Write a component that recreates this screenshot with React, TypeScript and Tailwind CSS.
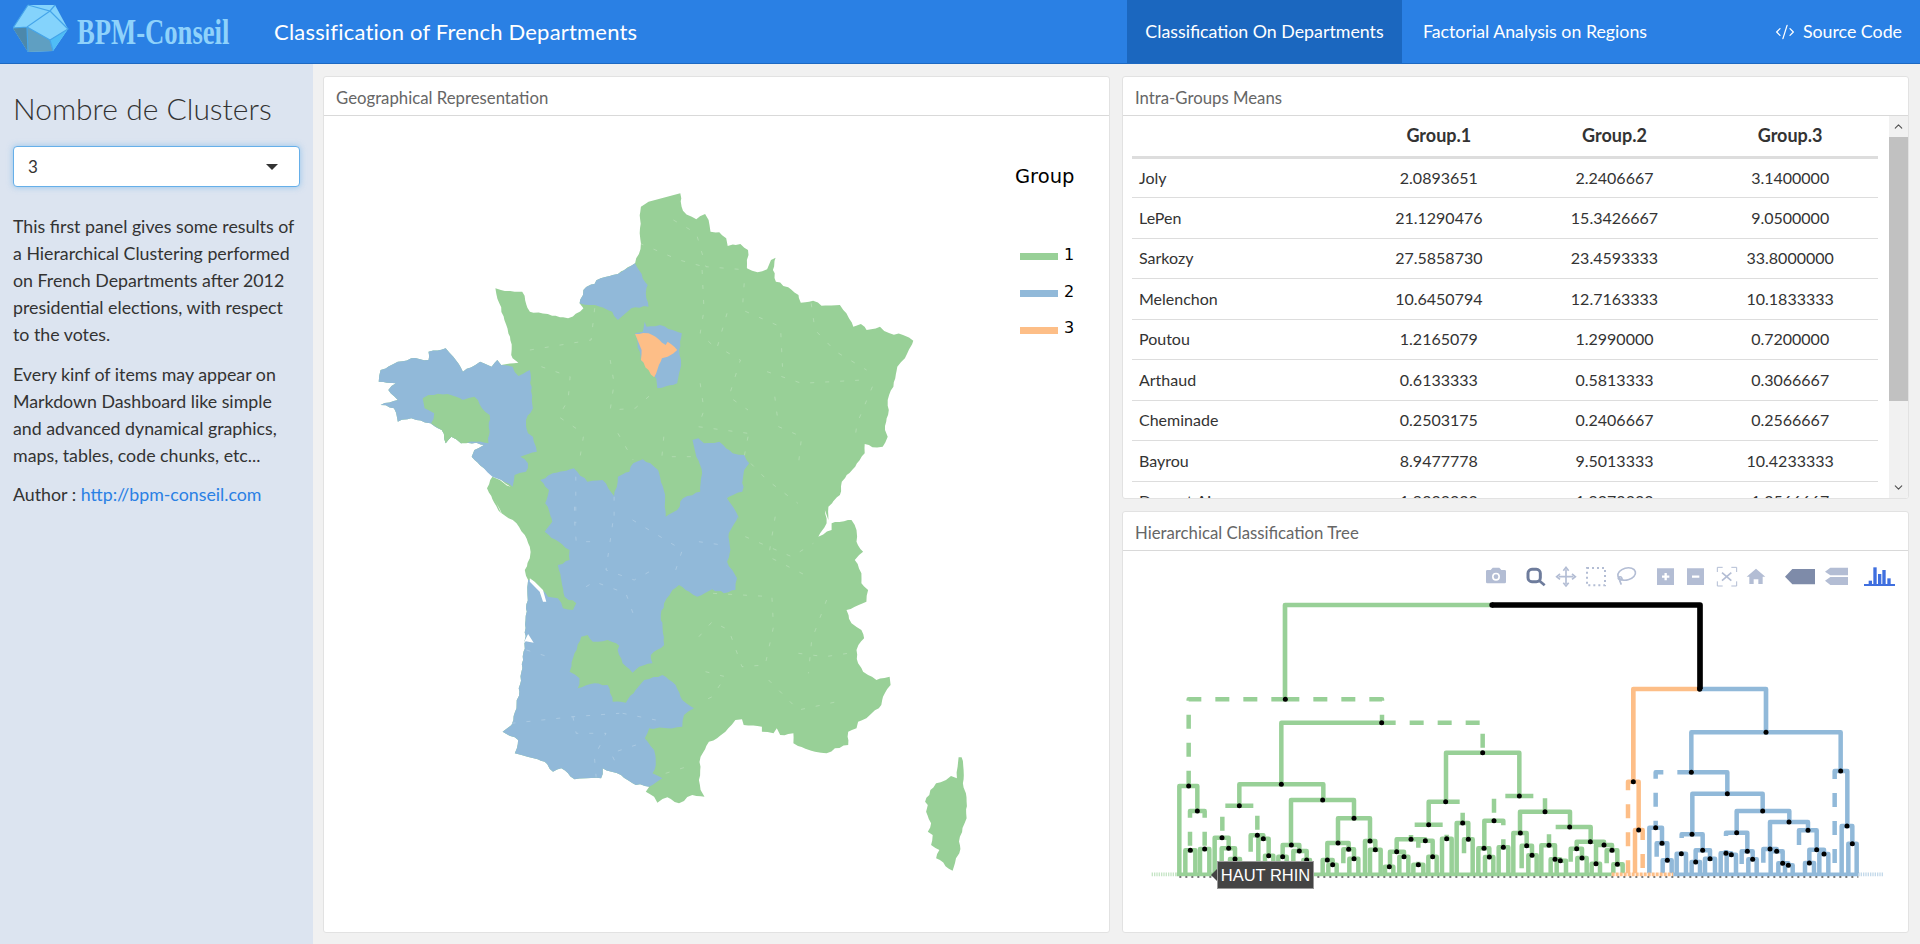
import { ChevronDown, ChevronUp, CodeXml } from "lucide-react";

const GREEN = "#98d097";
const BLUE = "#91b9d9";
const ORANGE = "#fdbe87";

// traced outlines, in crop coordinates of the two map crops
const north = (p: number[]) => toPoints(p, 350, 2.613, 170);
const south = (p: number[]) => toPoints(p, 480, 3.015, 500);

const noise = (x: number, y: number) => {
  const s = Math.sin(x * 12.9898 + y * 78.233) * 43758.5453;
  return (s - Math.floor(s) - 0.5) * 1.8;
};

// department edges are fine-grained, so break long segments up a little
function toPoints(p: number[], ox: number, sx: number, oy: number) {
  const out: string[] = [];
  for (let i = 0; i < p.length; i += 2) {
    const x = ox + p[i] / sx;
    const y = oy + p[i + 1] / 3;
    out.push(`${x.toFixed(1)},${y.toFixed(1)}`);
    if (i + 3 < p.length) {
      const nx = ox + p[i + 2] / sx;
      const ny = oy + p[i + 3] / 3;
      const steps = Math.floor(Math.hypot(nx - x, ny - y) / 4);
      for (let k = 1; k < steps; k++) {
        const px = Math.round((x + ((nx - x) * k) / steps) * 4) / 4;
        const py = Math.round((y + ((ny - y) * k) / steps) * 4) / 4;
        out.push(`${(px + noise(px, py)).toFixed(1)},${(py + noise(py, px)).toFixed(1)}`);
      }
    }
  }
  return out.join(" ");
}

const plain = (p: number[], ox: number, sx: number, oy: number) => {
  const out: string[] = [];
  for (let i = 0; i < p.length; i += 2) {
    out.push(`${(ox + p[i] / sx).toFixed(1)},${(oy + p[i + 1] / 3).toFixed(1)}`);
  }
  return out.join(" ");
};

const franceEast = [
  863, 70, 870, 122, 893, 140, 905, 148, 928, 132, 937, 150, 942, 185, 965, 187, 983, 205, 987, 228, 1020, 222, 1040,
  240, 1037, 295, 1065, 307, 1090, 298, 1100, 270, 1112, 263, 1105, 300, 1113, 335, 1145, 352, 1172, 375, 1178, 398,
  1210, 392, 1232, 407, 1280, 405, 1297, 430, 1315, 470, 1335, 462, 1350, 480, 1385, 470, 1410, 490, 1445, 495, 1472,
  512, 1450, 565, 1430, 590, 1420, 650, 1405, 690, 1408, 720, 1398, 780, 1405, 800, 1392, 830, 1365, 832, 1345, 822,
  1345, 850, 1320, 890, 1285, 935, 1280, 975, 1250, 1010, 1250, 1050,
];
const franceSouth = [
  1040, 30, 1045, 70, 1020, 110, 1060, 90, 1060, 70, 1120, 60, 1135, 90, 1135, 125, 1155, 155, 1130, 180, 1150, 220,
  1150, 250, 1170, 270, 1165, 305, 1105, 330, 1120, 370, 1150, 390, 1158, 415, 1135, 450, 1140, 490, 1155, 515, 1195,
  540, 1235, 530, 1238, 555, 1215, 590, 1210, 615, 1165, 655, 1140, 665, 1135, 685, 1110, 695, 1110, 735, 1070, 745,
  1045, 760, 1010, 755, 945, 730, 945, 700, 905, 705, 895, 685, 885, 700, 850, 695, 850, 680, 795, 675, 790, 658, 770,
  660, 740, 695, 715, 715, 690, 725, 665, 770, 660, 840, 665, 870, 677, 890, 640, 885, 600, 910, 565, 892, 535, 908,
  525, 890, 500, 875, 510, 860, 460, 850, 425, 825, 370, 805, 365, 835, 320, 835, 285, 838, 245, 805, 220, 815, 195,
  785, 125, 765, 105, 760, 115, 720, 68, 695, 95, 675, 110, 625, 130, 480, 135, 420, 145, 240, 135, 210, 150, 175, 150,
  140, 135, 105, 110, 70, 65, 40, 45, 0,
];
const franceWest = [
  395, 1030, 358, 955, 372, 920, 420, 950, 395, 930, 350, 895, 318, 860, 325, 840, 350, 825, 330, 818, 290, 820, 265,
  800, 250, 820, 240, 780, 210, 760, 160, 745, 125, 755, 115, 715, 80, 705, 125, 690, 100, 660, 120, 640, 75, 635, 80,
  600, 125, 575, 160, 565, 205, 570, 205, 545, 250, 535, 270, 560, 295, 605, 340, 575, 370, 590, 385, 570, 395, 585,
  440, 578, 425, 565, 418, 500, 390, 400, 380, 355, 430, 365, 450, 365, 470, 425, 570, 445, 610, 415, 600, 400, 610,
  360, 655, 325, 700, 312, 745, 280, 755, 252, 760, 220, 757, 190, 760, 110, 780, 95,
];
const brittany = [
  372, 920, 350, 895, 318, 860, 325, 840, 350, 825, 330, 818, 290, 820, 265, 800, 250, 820, 240, 780, 210, 760, 160,
  745, 125, 755, 115, 715, 80, 705, 125, 690, 100, 660, 120, 640, 75, 635, 80, 600, 125, 575, 160, 565, 205, 570, 205,
  545, 250, 535, 270, 560, 295, 605, 340, 575, 370, 590, 385, 570, 395, 585, 425, 590, 440, 618, 470, 600, 475, 690,
  478, 715, 460, 750, 465, 790, 478, 800, 488, 845, 445, 860, 465, 880, 460, 905, 430, 915, 425, 950, 395, 930,
];
const morbihan = [
  190, 685, 205, 675, 255, 672, 295, 690, 325, 680, 345, 715, 365, 735, 362, 820, 330, 815, 290, 820, 265, 800, 250,
  820, 240, 780, 212, 760, 220, 730, 195, 715,
];
const normandy = [
  745, 280, 778, 345, 773, 370, 780, 410, 735, 415, 700, 450, 685, 425, 640, 405, 600, 400, 610, 360, 655, 325, 700,
  312,
];
const paris = [770, 455, 775, 470, 810, 465, 867, 490, 860, 540, 865, 570, 855, 640, 803, 655, 800, 625, 760, 570, 745, 490, 765, 485];
const essonne = [
  745, 492, 780, 490, 790, 495, 825, 525, 830, 515, 855, 540, 830, 560, 815, 565, 800, 610, 795, 622, 780, 600, 760,
  570, 762, 540,
];
const centreNorth = [
  895, 810, 910, 805, 925, 820, 965, 815, 1000, 850, 1030, 855, 1043, 880, 1030, 900, 1025, 965, 990, 980, 985, 985,
  1015, 1040, 1018, 1075,
];
const centreSouth = [
  778, 50, 750, 100, 755, 150, 745, 185, 775, 235, 770, 270, 735, 280, 700, 268, 655, 290, 600, 255, 580, 270, 555, 310,
  545, 345, 555, 435, 515, 465, 520, 490, 480, 500, 460, 518, 430, 490, 415, 450, 420, 437, 385, 420, 340, 425, 325,
  405, 305, 410, 285, 460, 270, 515, 300, 535, 295, 565, 345, 550, 385, 555, 400, 605, 440, 608, 495, 540, 550, 525,
  590, 555, 610, 600, 645, 625, 615, 645, 610, 680, 565, 685, 510, 685, 497, 715, 525, 750, 530, 795, 520, 820, 550,
  835, 510, 860, 460, 850, 425, 825, 370, 805, 365, 835, 320, 835, 285, 838, 245, 805, 220, 815, 195, 785, 125, 765,
  105, 760, 115, 720, 68, 695, 95, 675, 110, 625, 130, 480, 135, 420, 145, 240, 158, 240, 205, 290, 235, 295, 250, 325,
  280, 330, 290, 310, 255, 290, 235, 195, 270, 180, 270, 150, 195, 95, 218, 65, 205, 0,
];
const centreWest = [
  530, 1050, 510, 1000, 520, 960, 497, 930, 530, 910, 585, 895, 620, 935, 660, 930, 690, 978, 700, 920, 730, 905, 740,
  880, 765, 868, 785, 880, 805, 900, 820, 960, 825, 1040, 855, 1020, 870, 985, 915, 965, 920, 910, 905, 860,
];
const corsica = [
  1443, 772, 1452, 772, 1458, 810, 1456, 850, 1465, 880, 1467, 955, 1447, 1010, 1445, 1060, 1435, 1075, 1425, 1112,
  1375, 1075, 1385, 1050, 1360, 1035, 1365, 1005, 1350, 995, 1360, 970, 1345, 935, 1350, 915, 1342, 905, 1358, 870,
  1375, 850, 1405, 840, 1420, 828, 1438, 835, 1440, 800,
];
const northBorders = [
  [845, 150, 905, 190, 930, 290, 1040, 300],
  [757, 220, 860, 270, 925, 290],
  [920, 300, 925, 420, 915, 490, 960, 540],
  [1030, 340, 1025, 420, 1125, 470, 1130, 590],
  [985, 430, 960, 530, 1020, 570, 990, 680, 1040, 720],
  [1205, 400, 1215, 480, 1270, 545, 1350, 600],
  [1090, 605, 1180, 640, 1340, 630],
  [1365, 650, 1325, 760, 1320, 800],
  [1110, 680, 1120, 770, 1180, 800, 1170, 900],
  [470, 540, 630, 510, 640, 410],
  [500, 590, 575, 620, 570, 690, 545, 740, 610, 790],
  [680, 570, 690, 640, 680, 720, 745, 715, 800, 660],
  [610, 800, 600, 870],
  [700, 790, 740, 870],
  [820, 800, 815, 860, 905, 860],
  [915, 640, 925, 720, 910, 770, 1040, 790],
  [1040, 800, 1030, 860, 1090, 930, 1170, 1000],
  [590, 920, 590, 1060],
  [690, 980, 690, 1070],
];
const southBorders = [
  [285, 20, 285, 60, 290, 125, 365, 125],
  [400, 70, 380, 210, 465, 240, 520, 210],
  [460, 60, 610, 150, 590, 210],
  [660, 125, 730, 135],
  [320, 260, 345, 245, 440, 280, 465, 350],
  [140, 450, 205, 470],
  [95, 670, 280, 650, 420, 640],
  [280, 650, 290, 700, 380, 700, 345, 770, 350, 830],
  [430, 640, 530, 660],
  [470, 735, 395, 760, 410, 790],
  [890, 50, 870, 170, 980, 225],
  [660, 410, 700, 365, 750, 390, 790, 500, 860, 495, 885, 380, 880, 290, 700, 280],
  [800, 110, 940, 170, 1005, 130],
  [960, 460, 1040, 470, 1110, 460],
  [870, 540, 960, 630, 1100, 600],
  [680, 515, 740, 530, 700, 590, 660, 610],
  [1045, 300, 1000, 420, 990, 520],
  [560, 820, 640, 795],
];

// hclust layout in units of 1/3 px: [x, y, leftX, leftEnd, rightX, rightEnd, dashLeft, dashRight]
type Node = [number, number, number, number, number, number, number?, number?];

const greenNodes: Node[] = [
  [436, 118, 146, 378, 726, 188, 1, 1],
  [725, 188, 424, 373, 1028, 278, 0, 1],
  [424, 373, 298, 437, 550, 420],
  [146, 378, 118, 640, 172, 453],
  [172, 453, 150, 571, 194, 567, 1, 1],
  [151, 571, 136, 640, 166, 640],
  [194, 567, 180, 640, 208, 640],
  [298, 437, 247, 533, 352, 526, 1, 1],
  [246, 533, 224, 640, 266, 565],
  [266, 565, 245, 640, 285, 597],
  [285, 597, 270, 640, 300, 640],
  [352, 526, 332, 575, 370, 536],
  [370, 536, 355, 640, 386, 587],
  [386, 587, 375, 640, 400, 640],
  [548, 420, 453, 555, 642, 475],
  [454, 555, 428, 590, 478, 573],
  [428, 590, 415, 640, 440, 640],
  [478, 573, 460, 640, 500, 600],
  [500, 600, 490, 640, 510, 640],
  [642, 475, 594, 549, 690, 543],
  [594, 549, 562, 600, 626, 568],
  [562, 600, 548, 640, 578, 614],
  [578, 614, 565, 640, 590, 640],
  [626, 568, 610, 610, 642, 596],
  [642, 596, 628, 640, 655, 640],
  [690, 543, 675, 640, 706, 569],
  [706, 569, 690, 640, 722, 640],
  [1028, 278, 918, 425, 1138, 408],
  [917, 425, 866, 494, 968, 489, 0, 1],
  [866, 494, 813, 538, 920, 536, 1, 1],
  [813, 538, 770, 575, 856, 542],
  [856, 542, 835, 614, 878, 590, 1, 0],
  [770, 575, 750, 620, 792, 590],
  [748, 620, 735, 640, 760, 640],
  [792, 590, 778, 640, 805, 640],
  [835, 614, 820, 640, 850, 640],
  [878, 590, 865, 640, 890, 640],
  [920, 536, 906, 640, 935, 640],
  [968, 489, 950, 640, 985, 538],
  [985, 538, 972, 580, 998, 640],
  [1138, 408, 1062, 482, 1215, 455, 1, 1],
  [1062, 482, 1033, 565, 1090, 562, 0, 1],
  [1032, 565, 1015, 640, 1048, 591],
  [1048, 591, 1035, 640, 1060, 640],
  [1090, 562, 1076, 640, 1105, 640],
  [1215, 455, 1140, 519, 1290, 501],
  [1141, 519, 1120, 640, 1160, 557],
  [1160, 557, 1145, 625, 1176, 586],
  [1176, 586, 1165, 640, 1190, 640],
  [1289, 501, 1227, 556, 1352, 545, 1, 0],
  [1227, 556, 1204, 640, 1245, 598],
  [1245, 598, 1232, 640, 1261, 602],
  [1261, 602, 1250, 640, 1278, 640],
  [1351, 545, 1310, 566, 1392, 555],
  [1310, 566, 1292, 605, 1326, 594],
  [1326, 594, 1312, 640, 1340, 640],
  [1392, 555, 1368, 611, 1416, 571],
  [1368, 611, 1355, 640, 1380, 640],
  [1416, 571, 1400, 610, 1432, 613],
  [1432, 613, 1420, 640, 1448, 640],
];
const orangeNodes: Node[] = [
  [1480, 365, 1464, 640, 1496, 510, 1, 0],
  [1496, 510, 1485, 640, 1508, 640, 0, 1],
];
const blueNodes: Node[] = [
  [1878, 217, 1654, 337, 2102, 333],
  [1654, 337, 1547, 503, 1762, 401, 1, 0],
  [1547, 503, 1528, 640, 1566, 550],
  [1566, 550, 1550, 590, 1582, 601],
  [1582, 601, 1568, 640, 1595, 640],
  [1762, 401, 1657, 523, 1868, 453],
  [1656, 523, 1625, 581, 1688, 571, 1, 0],
  [1624, 581, 1610, 640, 1638, 640],
  [1688, 571, 1667, 606, 1710, 596],
  [1667, 606, 1655, 640, 1680, 640],
  [1710, 596, 1695, 640, 1725, 640],
  [1868, 453, 1790, 518, 1948, 486],
  [1790, 518, 1758, 580, 1822, 574, 1, 0],
  [1758, 580, 1742, 640, 1774, 584],
  [1774, 584, 1760, 640, 1788, 640],
  [1822, 574, 1805, 612, 1838, 598],
  [1838, 598, 1825, 640, 1850, 640],
  [1947, 486, 1890, 567, 2004, 511],
  [1890, 567, 1870, 608, 1910, 574],
  [1910, 574, 1892, 640, 1928, 610],
  [1928, 610, 1915, 640, 1945, 616],
  [1945, 616, 1935, 640, 1958, 640],
  [2004, 511, 1977, 555, 2030, 569],
  [2030, 569, 2008, 609, 2052, 582],
  [2008, 609, 1995, 640, 2022, 640],
  [2052, 582, 2038, 640, 2065, 640],
  [2102, 333, 2084, 640, 2122, 498, 1, 0],
  [2121, 498, 2105, 640, 2137, 551],
  [2137, 551, 2125, 640, 2150, 640],
];

const rows = [
  ["Joly", "2.0893651", "2.2406667", "3.1400000"],
  ["LePen", "21.1290476", "15.3426667", "9.0500000"],
  ["Sarkozy", "27.5858730", "23.4593333", "33.8000000"],
  ["Melenchon", "10.6450794", "12.7163333", "10.1833333"],
  ["Poutou", "1.2165079", "1.2990000", "0.7200000"],
  ["Arthaud", "0.6133333", "0.5813333", "0.3066667"],
  ["Cheminade", "0.2503175", "0.2406667", "0.2566667"],
  ["Bayrou", "8.9477778", "9.5013333", "10.4233333"],
  ["Dupont.Aignan", "1.9222222", "1.9273333", "1.2566667"],
];

const Branches = ({ nodes, color }: { nodes: Node[]; color: string }) => (
  <g fill="none" stroke={color} strokeWidth={13.5} strokeLinejoin="round">
    {nodes.map(([x, y, lx, ly, rx, ry, dl, dr]) => (
      <g key={`${x}-${y}`}>
        <path d={`M${x} ${y}H${lx}V${ly}`} strokeDasharray={dl ? "42 42" : undefined} />
        <path d={`M${x} ${y}H${rx}V${ry}`} strokeDasharray={dr ? "42 42" : undefined} />
      </g>
    ))}
  </g>
);

const Dots = ({ nodes }: { nodes: Node[] }) => (
  <g fill="#000">
    {nodes.map(([x, y]) => (
      <circle key={`${x}-${y}`} cx={x} cy={y} r={7.5} />
    ))}
  </g>
);

const FranceMap = () => (
  <svg viewBox="324 116 785 816" className="block h-full w-full">
    <polygon
      fill={GREEN}
      points={`${north(franceEast)} ${south(franceSouth)} ${north(franceWest)}`}
    />
    <polygon fill={BLUE} points={north(brittany)} />
    <polygon fill={GREEN} points={north(morbihan)} />
    <polygon fill={BLUE} points={north(normandy)} />
    <polygon fill={BLUE} points={north(paris)} />
    <polygon fill={ORANGE} points={north(essonne)} />
    <polygon
      fill={BLUE}
      points={`${north(centreNorth)} ${south(centreSouth)} ${north(centreWest)}`}
    />
    <polygon fill={GREEN} points={south(corsica)} />
    <polygon fill="#fff" points={plain([150, 235, 165, 245, 190, 270, 200, 305, 190, 305, 180, 275, 150, 245], 480, 3.015, 500)} />
    <polygon fill="#fff" points={plain([130, 432, 145, 402, 162, 428, 138, 424], 480, 3.015, 500)} />
    <g fill="none" stroke="#fff" strokeWidth={0.5} strokeOpacity={0.45} strokeDasharray="4 11">
      {northBorders.map((b, i) => (
        <polyline key={i} points={plain(b, 350, 2.613, 170)} />
      ))}
      {southBorders.map((b, i) => (
        <polyline key={i} points={plain(b, 480, 3.015, 500)} />
      ))}
    </g>
    <g className="font-['DejaVu_Sans',sans-serif]" fill="#000">
      <text x={1015} y={183} fontSize={19.5}>
        Group
      </text>
      <rect x={1020} y={253} width={38} height={7} fill={GREEN} />
      <rect x={1020} y={290} width={38} height={7} fill={BLUE} />
      <rect x={1020} y={327} width={38} height={7} fill={ORANGE} />
      <text x={1064} y={260} fontSize={16}>
        1
      </text>
      <text x={1064} y={297} fontSize={16}>
        2
      </text>
      <text x={1064} y={333} fontSize={16}>
        3
      </text>
    </g>
  </svg>
);

const ModeBar = () => (
  <g transform="translate(960 -330)">
    <g fill="#b3bdd4">
      <path d="M78 64a4 4 0 0 1 4-4h10l6-7h20l6 7h10a4 4 0 0 1 4 4v32a4 4 0 0 1-4 4H82a4 4 0 0 1-4-4z" />
      <circle cx={108} cy={80} r={12} fill="#fff" />
      <circle cx={108} cy={80} r={7} />
      <path d="M591 55h51v50h-51z" />
      <path d="M681 55h51v50h-51z" />
      <path d="M888 56l28 24h-8v22h-13V88h-14v14h-13V80h-8z" />
      <path d="M1095 65l16-12h53v23h-53zM1095 92l16-11h53v24h-53z" />
    </g>
    <path d="M606 80h22M617 69v22M696 80h22" stroke="#fff" strokeWidth={7} />
    <path d="M975 80l22-23h68v46h-68z" fill="#7e8ba9" />
    <g fill="none" stroke="#6e7c9c">
      <rect x={204} y={58} width={37} height={37} rx={12} strokeWidth={9} />
      <path d="M238 92l16 14" strokeWidth={8} />
    </g>
    <g fill="none" stroke="#b3bdd4" strokeWidth={5}>
      <path d="M318 58v44M296 80h44" />
      <path d="M310 62l8-10 8 10M310 98l8 10 8-10M300 72l-10 8 10 8M336 72l10 8-10 8" />
      <rect x={381} y={54} width={54} height={52} strokeWidth={6} strokeDasharray="6 9" />
      <ellipse cx={500} cy={72} rx={27} ry={18} transform="rotate(-15 500 72)" />
      <path d="M474 82c2 10 18 10 10 0-2-3-8-2-8 2l8 20" />
      <path d="M772 66V52h16M814 52h16v14M830 94v14h-16M788 108h-16V94" strokeWidth={3} />
      <path d="M786 68l28 24M814 68l-28 24" />
    </g>
    <g fill="#3f6fdf">
      <rect x={1212} y={102} width={93} height={6} />
      <rect x={1226} y={92} width={10} height={16} />
      <rect x={1240} y={52} width={10} height={56} />
      <rect x={1254} y={72} width={10} height={36} />
      <rect x={1267} y={60} width={10} height={48} />
      <rect x={1282} y={85} width={10} height={23} />
    </g>
  </g>
);

const Dendrogram = () => (
  <svg viewBox="-51 -327 2355 1143" className="block h-full w-full">
    <ModeBar />
    <Branches nodes={greenNodes} color={GREEN} />
    <Branches nodes={blueNodes} color={BLUE} />
    <Branches nodes={orangeNodes} color={ORANGE} />
    <g fill="none" strokeLinejoin="round">
      <path d="M1056 -165H435V118" stroke={GREEN} strokeWidth={14} />
      <path d="M1679 87H1480V365" stroke={ORANGE} strokeWidth={14} />
      <path d="M1679 87H1878V217" stroke={BLUE} strokeWidth={14} />
      <path d="M1056 -165H1680V87" stroke="#000" strokeWidth={17} />
    </g>
    <g strokeWidth={11} fill="none">
      <path d="M110 643H1415" stroke={GREEN} />
      <path d="M35 643H110" stroke={GREEN} strokeOpacity={0.55} strokeDasharray="4 3" />
      <path d="M1415 643H1600" stroke={ORANGE} strokeDasharray="9 3" />
      <path d="M1600 643H2155" stroke={BLUE} />
      <path d="M2155 643H2230" stroke={BLUE} strokeOpacity={0.55} strokeDasharray="4 3" />
    </g>
    <path d="M118 651H2155" stroke="#000" strokeWidth={3} strokeDasharray="6 12" fill="none" />
    <Dots nodes={greenNodes} />
    <Dots nodes={blueNodes} />
    <Dots nodes={orangeNodes} />
    <circle cx={1056} cy={-165} r={8} fill="#000" />
    <circle cx={1679} cy={87} r={8} fill="#000" />
  </svg>
);

const Card = ({ title, children }: { title: string; children: React.ReactNode }) => (
  <section className="flex min-h-0 flex-col overflow-hidden rounded-[3px] border border-[#e2e2e2] bg-white">
    <h3 className="flex h-[39px] shrink-0 items-center border-b border-[#d9d9d9] px-3 pt-1 text-[16.75px] text-[#666]">
      {title}
    </h3>
    <div className="relative min-h-0 flex-1">{children}</div>
  </section>
);

const MeansTable = () => (
  <div className="flex h-full">
    <div className="min-w-0 flex-1 overflow-hidden pl-[9px] pr-[11px]">
      <table className="w-full table-fixed border-collapse text-[#333]">
        <thead>
          <tr className="h-[41px] border-b-[3px] border-[#ddd]">
            <th className="w-[219px]" />
            <th className="text-center text-[18px] font-bold">Group.1</th>
            <th className="text-center text-[18px] font-bold">Group.2</th>
            <th className="text-center text-[18px] font-bold">Group.3</th>
          </tr>
        </thead>
        <tbody>
          {rows.map((row) => (
            <tr key={row[0]} className="h-[40.5px] border-b border-[#ddd] text-[16px]">
              <td className="pl-[7px]">{row[0]}</td>
              <td className="text-center">{row[1]}</td>
              <td className="text-center">{row[2]}</td>
              <td className="text-center">{row[3]}</td>
            </tr>
          ))}
        </tbody>
      </table>
    </div>
    <div className="flex w-[19px] shrink-0 flex-col items-center bg-[#f1f1f1]">
      <div className="flex h-[21px] shrink-0 items-center justify-center text-[#505050]">
        <ChevronUp size={13} strokeWidth={2} />
      </div>
      <div className="h-[264px] w-full shrink-0 bg-[#c1c1c1]" />
      <div className="mt-auto flex h-[21px] shrink-0 items-center justify-center text-[#505050]">
        <ChevronDown size={13} strokeWidth={2} />
      </div>
    </div>
  </div>
);

export default function App() {
  return (
    <div className="flex h-screen flex-col overflow-hidden bg-[#f1f1f1] font-['Lato',sans-serif] text-[#333]">
      <nav className="flex h-16 shrink-0 items-stretch border-b border-[#1d69c2] bg-[#2a80e4] text-white">
        <div className="flex w-[274px] shrink-0 items-center pl-[13px]">
          <svg viewBox="13 6 57 52" className="-mt-[4px] h-[52px] w-[57px] shrink-0">
            <polygon points="28,7 55,7 68,31 53,53 28,54 13,30" fill="#84d3fc" />
            <polygon points="13,30 27,29 50,42 53,53 28,54" fill="#5f9fc2" />
            <polygon points="50,42 68,31 53,53" fill="#4fbdf6" />
            <polygon points="13,30 27,29 28,54" fill="#4c88ab" />
            <path
              d="M28 7L50 13 55 7M50 13L27 29 13 30M50 13L68 31 50 42 27 29M50 42L53 53M27 29L28 54M28 7L13 30"
              fill="none"
              stroke="#45a5ea"
              strokeWidth={1.2}
            />
          </svg>
          <span className="ml-[7px] origin-left scale-x-[0.74] whitespace-nowrap font-['Liberation_Serif',serif] text-[36px] font-bold text-[#8fd2fb]">
            BPM-Conseil
          </span>
        </div>
        <div className="flex items-center whitespace-nowrap text-[22px] tracking-[0.2px]">
          Classification of French Departments
        </div>
        <div className="ml-auto flex w-[275px] items-center justify-center whitespace-nowrap bg-[#1b67bf] text-[17.8px]">
          Classification On Departments
        </div>
        <div className="mr-[90px] flex w-[266px] items-center justify-center whitespace-nowrap text-[17.8px]">
          Factorial Analysis on Regions
        </div>
        <div className="flex w-[162px] items-center justify-end gap-[8px] whitespace-nowrap pr-[18px] text-[17.8px]">
          <CodeXml size={20} strokeWidth={1.5} />
          Source Code
        </div>
      </nav>
      <div className="flex min-h-0 flex-1">
        <aside className="w-[313px] shrink-0 bg-[#dce4f0] px-[13px]">
          <h2 className="mt-[24px] whitespace-nowrap text-[30px] font-light leading-[40px] text-[#333]">
            Nombre de Clusters
          </h2>
          <div className="relative mt-[18px] flex h-[41px] items-center rounded-[4px] border border-[#66afe9] bg-white pl-[14px] text-[17px] shadow-[0_0_6px_rgba(102,175,233,0.6)]">
            3
            <span className="absolute right-[21px] top-[17px] h-0 w-0 border-x-[6px] border-t-[6px] border-x-transparent border-t-[#333]" />
          </div>
          <div className="mt-[26px] text-[17.8px] leading-[27px]">
            <p className="whitespace-nowrap">
              This first panel gives some results of
              <br />a Hierarchical Clustering performed
              <br />
              on French Departments after 2012
              <br />
              presidential elections, with respect
              <br />
              to the votes.
            </p>
            <p className="mt-[13px] whitespace-nowrap">
              Every kinf of items may appear on
              <br />
              Markdown Dashboard like simple
              <br />
              and advanced dynamical graphics,
              <br />
              maps, tables, code chunks, etc...
            </p>
            <p className="mt-[12px] whitespace-nowrap">
              Author : <a className="text-[#2a80e4]">http://bpm-conseil.com</a>
            </p>
          </div>
        </aside>
        <main className="grid min-w-0 flex-1 grid-cols-[787px_787px] gap-3 pb-[11px] pl-[10px] pt-3">
          <Card title="Geographical Representation">
            <FranceMap />
          </Card>
          <div className="grid min-h-0 grid-rows-[423px_422px] gap-3">
            <Card title="Intra-Groups Means">
              <MeansTable />
            </Card>
            <Card title="Hierarchical Classification Tree">
              <Dendrogram />
              <div className="absolute left-[94px] top-[310px] flex h-[28px] w-[97px] items-center justify-center border border-[#999] bg-[#444] font-['Liberation_Sans',sans-serif] text-[16.5px] text-white">
                <span className="absolute -left-[7px] top-[7px] h-0 w-0 border-y-[6px] border-r-[6px] border-y-transparent border-r-[#444]" />
                HAUT RHIN
              </div>
            </Card>
          </div>
        </main>
      </div>
    </div>
  );
}
